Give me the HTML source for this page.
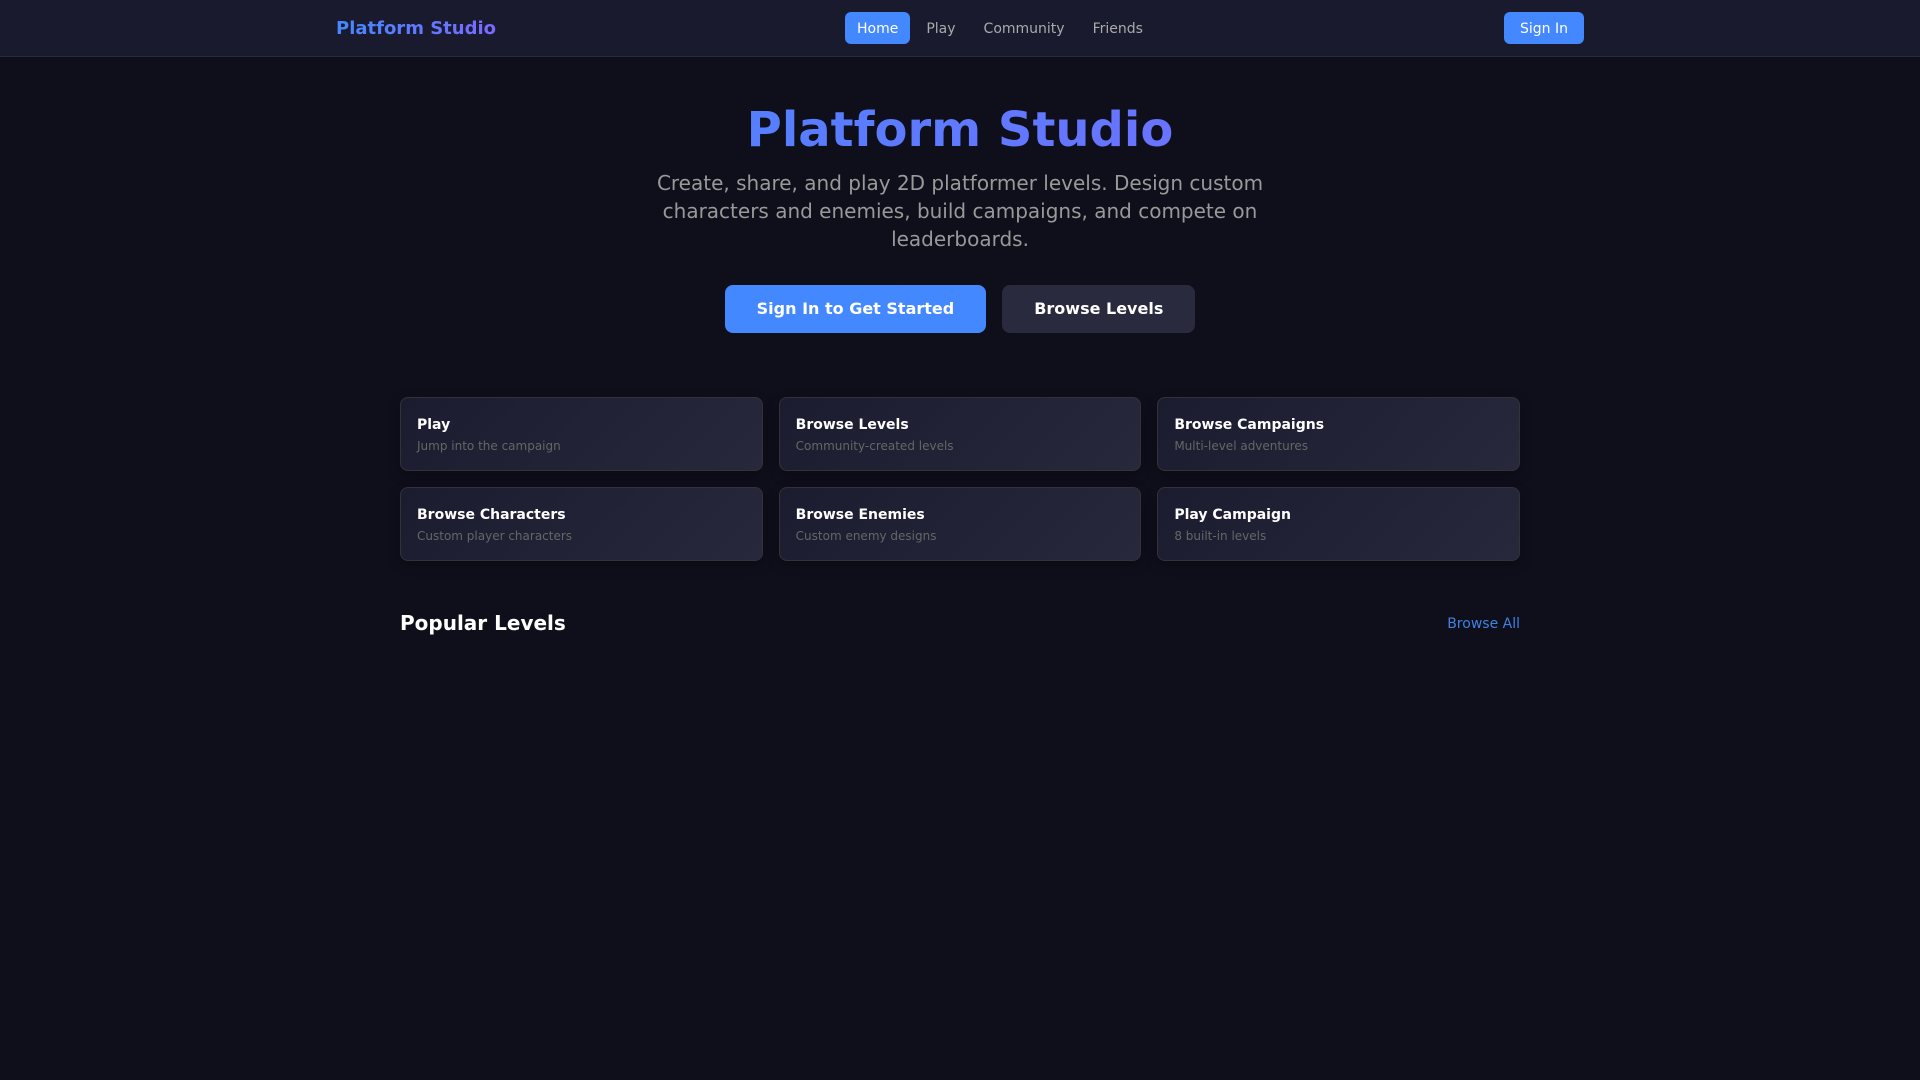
<!DOCTYPE html>
<html lang="en">
<head>
<meta charset="utf-8">
<title>Platform Studio</title>
<style>
*{box-sizing:border-box;margin:0;padding:0}
html,body{width:1920px;height:1080px;overflow:hidden;background:#0f0f1c;font-family:"DejaVu Sans",sans-serif;color:#fff}
a{text-decoration:none;color:inherit}
header{height:57px;background:#1a1a2e;border-bottom:1px solid #2a2a3e}
.hin{width:1280px;margin:0 auto;padding:0 16px;height:56px;display:flex;align-items:center;justify-content:space-between;position:relative}
.logo{font-size:18px;font-weight:700;background:linear-gradient(90deg,#4488ff,#7a6aff);-webkit-background-clip:text;background-clip:text;color:transparent;line-height:27px}
nav{position:absolute;left:525px;top:12px;display:flex;gap:4px}
nav a{display:block;height:32px;line-height:34px;padding:0 12px;font-size:14px;color:#aaa;border-radius:6px}
nav a.on{background:#4488ff;color:#fff}
.signin{display:block;height:32px;line-height:34px;padding:0 16px;font-size:14px;background:#4488ff;color:#fff;border-radius:6px}
main{width:1120px;margin:0 auto}
.hero{text-align:center;position:relative;height:340px}
h1{position:absolute;left:0;right:0;top:44px;font-size:48px;line-height:58px;font-weight:700;background:linear-gradient(135deg,#4488ff,#7a6aff);-webkit-background-clip:text;background-clip:text;color:transparent}
.hero p{position:absolute;left:240px;width:640px;top:112px;font-size:20px;line-height:28px;color:#999}
.btns{position:absolute;top:228px;left:0;right:0;display:flex;justify-content:center;gap:16px}
.btns a{display:block;height:48px;line-height:47px;padding:0 32px;font-size:16px;font-weight:700;border-radius:8px;color:#fff}
.b1{background:#4488ff}
.b2{background:#2a2a3e}
.grid{display:grid;grid-template-columns:repeat(3,1fr);gap:16px}
.card{display:block;height:74px;padding:17px 16px 0;border:1px solid #323238;border-radius:8px;background:linear-gradient(135deg,#1c1c30,#28283c);box-shadow:0 4px 12px rgba(0,0,0,.3)}
.card b{display:block;font-size:14px;line-height:21px;font-weight:700;color:#fff}
.card span{display:block;font-size:12px;line-height:18px;margin-top:1px;color:#666}
.sec{display:flex;justify-content:space-between;align-items:center;margin-top:48px;height:30px}
.sec h2{font-size:20px;font-weight:700;line-height:30px;position:relative;top:-1px}
.sec a{font-size:14px;color:#4080e0}
</style>
</head>
<body>
<header>
  <div class="hin">
    <a class="logo" href="#">Platform Studio</a>
    <nav>
      <a class="on" href="#">Home</a>
      <a href="#">Play</a>
      <a href="#">Community</a>
      <a href="#">Friends</a>
    </nav>
    <a class="signin" href="#">Sign In</a>
  </div>
</header>
<main>
  <section class="hero">
    <h1>Platform Studio</h1>
    <p>Create, share, and play 2D platformer levels. Design custom characters and enemies, build campaigns, and compete on leaderboards.</p>
    <div class="btns">
      <a class="b1" href="#">Sign In to Get Started</a>
      <a class="b2" href="#">Browse Levels</a>
    </div>
  </section>
  <section class="grid">
    <a class="card" href="#"><b>Play</b><span>Jump into the campaign</span></a>
    <a class="card" href="#"><b>Browse Levels</b><span>Community-created levels</span></a>
    <a class="card" href="#"><b>Browse Campaigns</b><span>Multi-level adventures</span></a>
    <a class="card" href="#"><b>Browse Characters</b><span>Custom player characters</span></a>
    <a class="card" href="#"><b>Browse Enemies</b><span>Custom enemy designs</span></a>
    <a class="card" href="#"><b>Play Campaign</b><span>8 built-in levels</span></a>
  </section>
  <section class="sec">
    <h2>Popular Levels</h2>
    <a href="#">Browse All</a>
  </section>
</main>
</body>
</html>
